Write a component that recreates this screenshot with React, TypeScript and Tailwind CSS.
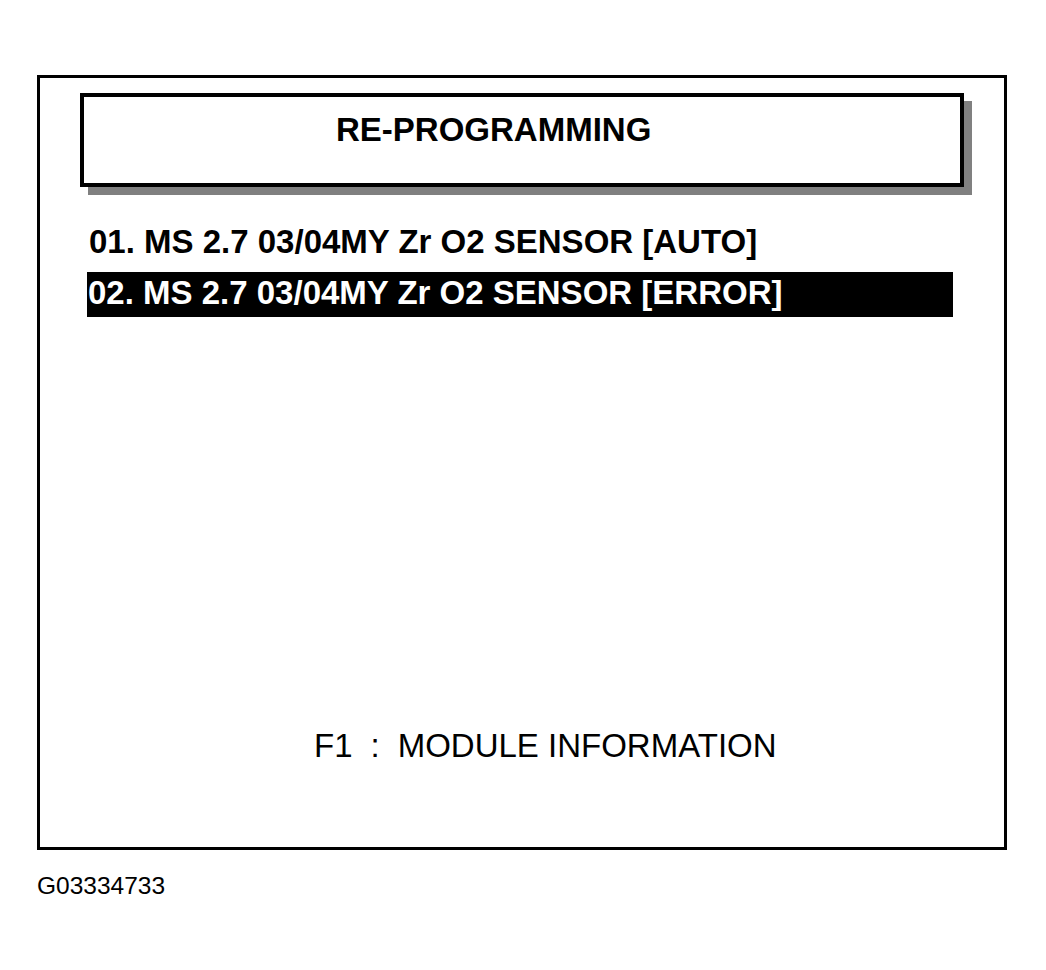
export default function App() {
  const font = { fontFamily: '"Liberation Sans", Arial, sans-serif' };

  return (
    <div className="min-h-[970px] w-[1046px] bg-white pl-[37px] pt-[75px] text-black" style={font}>
      {/* Scan tool screen */}
      <div className="flex h-[775px] w-[970px] flex-col border-[3px] border-black">
        {/* Title box */}
        <div className="mx-[40px] mt-[15px] h-[94px] border-4 border-black bg-white pl-[252px] pt-[16px] shadow-[8px_8px_0_#808080]">
          <span className="text-[33px] font-bold leading-none">RE-PROGRAMMING</span>
        </div>

        {/* Menu */}
        <div className="mt-[35px] flex flex-col gap-[5px] pl-[47px]">
          <div className="h-[45px] w-[866px] pl-[2px] text-[33px] font-bold leading-[39px]">
            01. MS 2.7 03/04MY Zr O2 SENSOR [AUTO]
          </div>
          <div className="h-[45px] w-[866px] bg-black pl-[1px] text-[33px] font-bold leading-[41px] text-white">
            02. MS 2.7 03/04MY Zr O2 SENSOR [ERROR]
          </div>
        </div>

        {/* Function key hint */}
        <div className="mt-auto mb-[85px] flex items-baseline pl-[274px] text-[33px] leading-none">
          <span>F1</span>
          <span className="ml-[18px]">:</span>
          <span className="ml-[18px]">MODULE INFORMATION</span>
        </div>
      </div>

      <div className="mt-[24px] text-[24.5px] leading-none">G03334733</div>
    </div>
  );
}
